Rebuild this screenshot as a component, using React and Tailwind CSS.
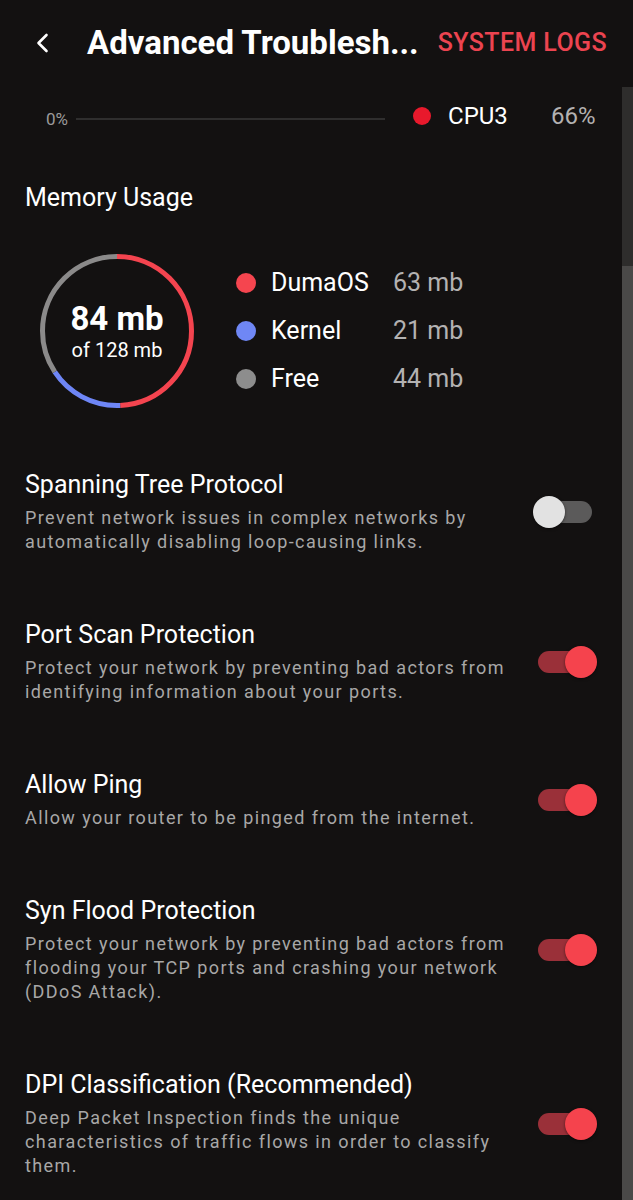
import React from "react";

const font = { fontFamily: "Roboto, 'Noto Sans', sans-serif" };

function Toggle({ on }) {
  return (
    <div className="relative w-[64px] h-[32px] shrink-0">
      <div
        className={`absolute left-[5px] top-[5px] w-[54px] h-[22px] rounded-full ${
          on ? "bg-[#9a3039]" : "bg-[#5b5a5a]"
        }`}
      />
      <div
        className={`absolute top-0 w-[32px] h-[32px] rounded-full shadow-[0_1px_3px_rgba(0,0,0,0.5)] ${
          on ? "right-0 bg-[#f5434d]" : "left-0 bg-[#e2e2e2]"
        }`}
      />
    </div>
  );
}

function Row({ title, desc, on }) {
  return (
    <div className="flex items-center pt-[33px] pb-[32px] pl-[25px] pr-[25px]">
      <div className="flex-1 min-w-0">
        <div className="text-[25px] leading-[32px] text-white">{title}</div>
        <div className="mt-[5px] text-[18px] leading-[24px] tracking-[1.4px] text-[#a8a7a7]">
          {desc}
        </div>
      </div>
      <div className="ml-[20px]">
        <Toggle on={on} />
      </div>
    </div>
  );
}

function Donut() {
  const r = 74.5;
  const C = 2 * Math.PI * r;
  const segs = [
    { color: "#f4444f", frac: 63 / 128 },
    { color: "#6e86f6", frac: 21 / 128 },
    { color: "#8b8a8a", frac: 44 / 128 },
  ];
  let acc = 0;
  return (
    <div className="relative w-[160px] h-[160px] shrink-0">
      <svg width="160" height="160" viewBox="0 0 160 160" className="absolute inset-0">
        <g transform="rotate(-90 80 80)">
          {segs.map((s, i) => {
            const len = s.frac * C;
            const el = (
              <circle
                key={i}
                cx="80"
                cy="80"
                r={r}
                fill="none"
                stroke={s.color}
                strokeWidth="5"
                strokeDasharray={`${len} ${C - len}`}
                strokeDashoffset={-acc}
              />
            );
            acc += len;
            return el;
          })}
        </g>
      </svg>
      <div className="absolute inset-0 flex flex-col items-center justify-center">
        <div className="text-[33px] leading-[36px] font-bold text-white mt-[2px]">84 mb</div>
        <div className="text-[20px] leading-[26px] text-white">of 128 mb</div>
      </div>
    </div>
  );
}

function Legend({ color, label, value }) {
  return (
    <div className="flex items-center h-[48px]">
      <div className="w-[20px] h-[20px] rounded-full" style={{ backgroundColor: color }} />
      <div className="ml-[15px] w-[122px] text-[25px] text-white">{label}</div>
      <div className="text-[25px] text-[#b3b2b2]">{value}</div>
    </div>
  );
}

export default function App() {
  return (
    <div className="w-[633px] h-[1200px] overflow-hidden bg-[#131111] flex flex-col" style={font}>
      {/* Header */}
      <div className="h-[87px] shrink-0 flex items-center pb-[1px]">
        <div className="w-[87px] flex items-center pl-[35px]">
          <svg width="16" height="22" viewBox="0 0 16 22">
            <path d="M11.5 3 L3.5 11 L11.5 19" fill="none" stroke="white" strokeWidth="2.6" strokeLinecap="round" strokeLinejoin="round" />
          </svg>
        </div>
        <div className="flex-1 text-[33px] font-bold text-white leading-[38px] whitespace-nowrap">
          Advanced Troublesh...
        </div>
        <div className="pr-[26px] text-[25px] font-medium text-[#ec4450] tracking-[0.4px]">SYSTEM LOGS</div>
      </div>

      <div className="flex-1 flex min-h-0">
        <div className="flex-1 min-w-0">
          {/* CPU legend row */}
          <div className="flex items-center h-[30px] mt-[14px] pl-[46px]">
            <div className="text-[17px] text-[#9b9a9a] mt-[7px]">0%</div>
            <div className="ml-[8px] w-[309px] h-[2px] bg-[#2f2e2e] mt-[6px]" />
            <div className="ml-[28px] w-[18px] h-[18px] rounded-full bg-[#e8192c]" />
            <div className="ml-[17px] w-[103px] text-[24px] text-white">CPU3</div>
            <div className="text-[24px] text-[#b3b2b2]">66%</div>
          </div>

          {/* Memory */}
          <div className="pl-[25px] mt-[52px] text-[25px] leading-[30px] text-white">Memory Usage</div>
          <div className="flex items-center pl-[37px] mt-[38px]">
            <Donut />
            <div className="ml-[39px] flex flex-col">
              <Legend color="#f5454f" label="DumaOS" value="63 mb" />
              <Legend color="#6f87f5" label="Kernel" value="21 mb" />
              <Legend color="#8d8d8d" label="Free" value="44 mb" />
            </div>
          </div>

          <div className="mt-[25px]">
            <Row
              title="Spanning Tree Protocol"
              desc="Prevent network issues in complex networks by automatically disabling loop-causing links."
              on={false}
            />
            <Row
              title="Port Scan Protection"
              desc="Protect your network by preventing bad actors from identifying information about your ports."
              on
            />
            <Row title="Allow Ping" desc="Allow your router to be pinged from the internet." on />
            <Row
              title="Syn Flood Protection"
              desc="Protect your network by preventing bad actors from flooding your TCP ports and crashing your network (DDoS Attack)."
              on
            />
            <Row
              title="DPI Classification (Recommended)"
              desc="Deep Packet Inspection finds the unique characteristics of traffic flows in order to classify them."
              on
            />
          </div>
        </div>
        {/* Scrollbar */}
        <div className="w-[11px] shrink-0 flex flex-col">
          <div className="h-[179px] bg-[#2e2d2c]" />
          <div className="flex-1 bg-[#4a4948]" />
        </div>
      </div>
    </div>
  );
}
